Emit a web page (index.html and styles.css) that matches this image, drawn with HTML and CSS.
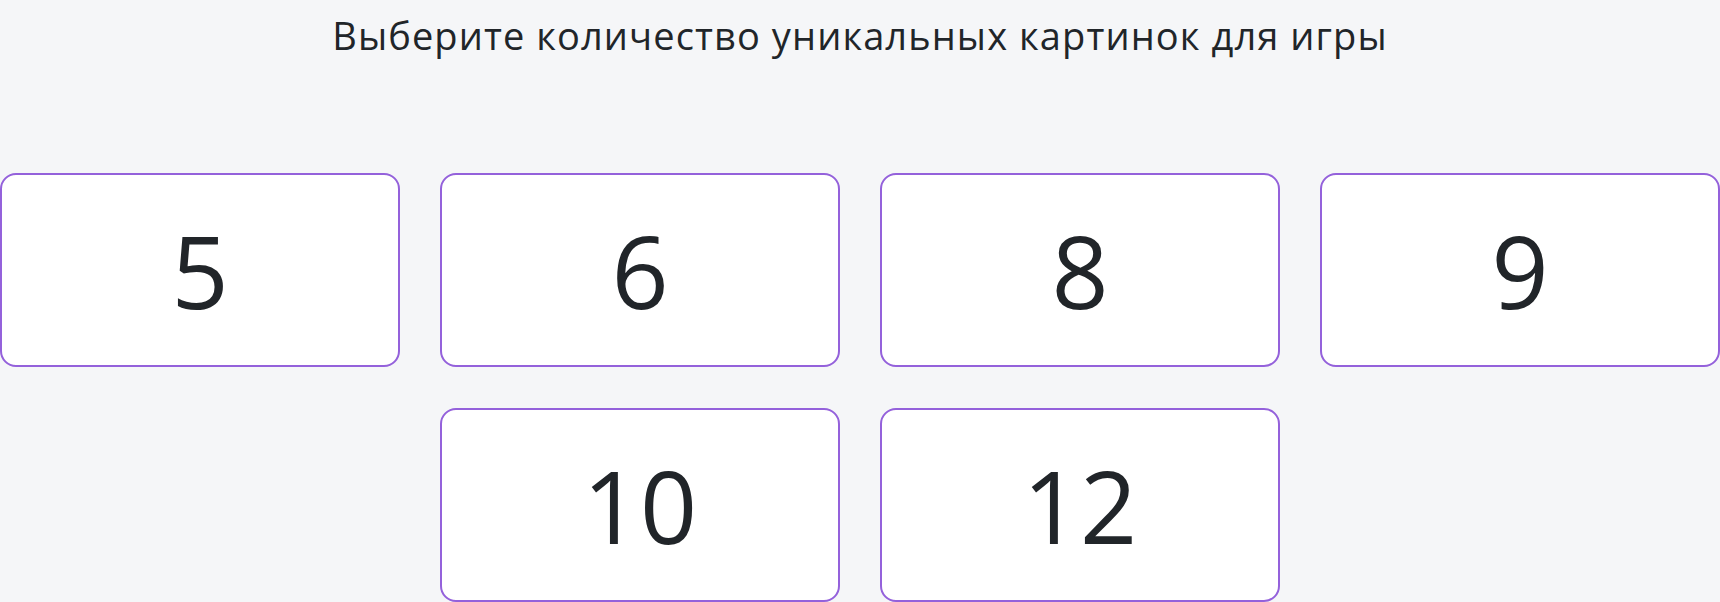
FILE: index.html
```html
<!DOCTYPE html>
<html lang="ru">
<head>
<meta charset="utf-8">
<title>Количество картинок</title>
<link rel="stylesheet" href="styles.css">
</head>
<body>
  <main class="setup">
    <h1 class="setup__title">Выберите количество уникальных картинок для игры</h1>
    <div class="choices">
      <button class="choice" type="button">5</button>
      <button class="choice" type="button">6</button>
      <button class="choice" type="button">8</button>
      <button class="choice" type="button">9</button>
      <button class="choice" type="button">10</button>
      <button class="choice" type="button">12</button>
    </div>
  </main>
</body>
</html>
```

FILE: styles.css
```css
html, body {
  margin: 0;
  padding: 0;
}

body {
  background: #f5f6f8;
  color: #212529;
  font-family: "Open Sans", "Noto Sans", sans-serif;
  overflow: hidden;
}

.setup {
  display: flex;
  flex-direction: column;
  align-items: center;
}

.setup__title {
  margin: 7px 0 0;
  font-size: 38px;
  font-weight: 400;
  line-height: 57px;
  letter-spacing: 1.1px;
  text-align: center;
}

.choices {
  margin-top: 109px;
  width: 100%;
  display: flex;
  flex-wrap: wrap;
  justify-content: center;
  gap: 41px 40px;
}

.choice {
  box-sizing: border-box;
  width: 400px;
  height: 194px;
  padding: 0;
  background: #ffffff;
  border: 2px solid #9461db;
  border-radius: 16px;
  color: #212529;
  font-family: "Open Sans", "Noto Sans", sans-serif;
  font-size: 100px;
  line-height: 1;
  cursor: pointer;
}
```
